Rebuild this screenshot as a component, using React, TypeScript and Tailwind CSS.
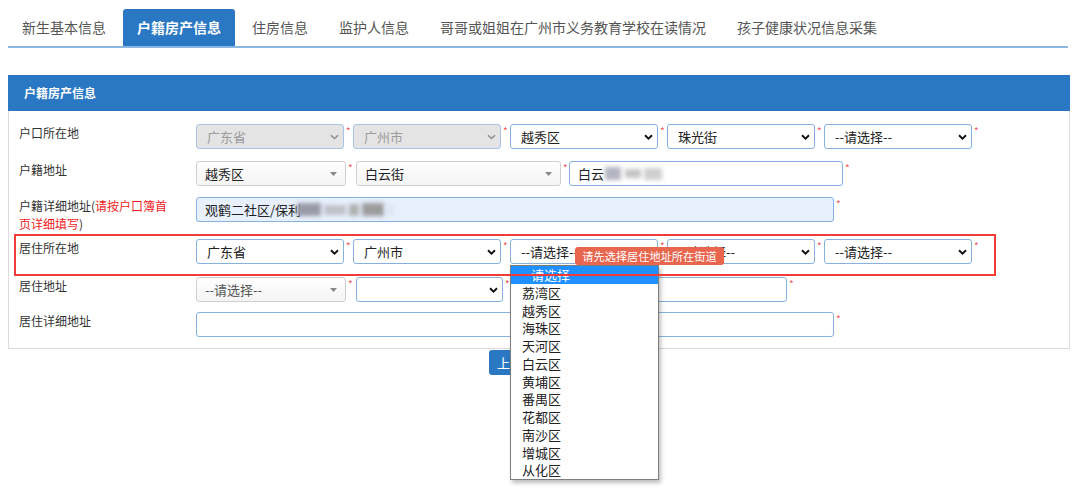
import React from 'react';

const tabs = ['新生基本信息', '户籍房产信息', '住房信息', '监护人信息', '哥哥或姐姐在广州市义务教育学校在读情况', '孩子健康状况信息采集'];
const districts = ['荔湾区', '越秀区', '海珠区', '天河区', '白云区', '黄埔区', '番禺区', '花都区', '南沙区', '增城区', '从化区'];

function Chevron({ gray }: { gray?: boolean }) {
  return (
    <svg width="9" height="6" viewBox="0 0 9 6" className="shrink-0">
      <path d="M1 1.2L4.5 4.6L8 1.2" fill="none" stroke={gray ? '#8c8c8c' : '#111'} strokeWidth={gray ? 1.4 : 1.9} />
    </svg>
  );
}

function Tri() {
  return (
    <svg width="7" height="4" viewBox="0 0 7 4" className="shrink-0">
      <path d="M0 0H7L3.5 4Z" fill="#888" />
    </svg>
  );
}

function Star({ cls }: { cls: string }) {
  return <span className={`${cls} shrink-0 pl-[2px] pt-[2px] text-[10px] leading-[10px] text-[#f25555]`}>*</span>;
}

function NSelect({ cls, text, disabled }: { cls: string; text?: string; disabled?: boolean }) {
  return (
    <div
      className={`${cls} flex h-[25px] shrink-0 items-center justify-between rounded-[3px] border pl-[10px] pr-[4px] text-[13px] ${
        disabled ? 'border-[#a8c5e7] bg-[#e4e4e4] text-[#9b9b9b]' : 'border-[#86b1e1] bg-white text-[#222]'
      }`}
    >
      <span>{text}</span>
      <Chevron gray={disabled} />
    </div>
  );
}

function CSelect({ cls, text, light }: { cls: string; text: string; light?: boolean }) {
  return (
    <div
      className={`${cls} flex h-[25px] shrink-0 items-center justify-between rounded-[3px] border border-[#d0d0d0] bg-gradient-to-b from-white to-[#f4f4f4] pl-[8px] pr-[8px] text-[13px] ${
        light ? 'text-[#555]' : 'text-[#222]'
      }`}
    >
      <span>{text}</span>
      <Tri />
    </div>
  );
}

function Row({ label, children, cls }: { label: React.ReactNode; children: React.ReactNode; cls: string }) {
  return (
    <div className={`flex items-start ${cls}`}>
      <div className="w-[187px] shrink-0 pl-[10px] pr-[25px] text-[12px] leading-[18px] text-[#333]">{label}</div>
      <div className="flex items-start">{children}</div>
    </div>
  );
}

export default function App() {
  return (
    <div className="relative h-[492px] w-[1080px] overflow-hidden bg-white font-['Noto_Sans_CJK_SC',sans-serif] text-[#333]">
      {/* tabs */}
      <div className="ml-[8px] mr-[12px] mt-[9px] flex gap-[3px] border-b-[2px] border-[#8db7e3]">
        {tabs.map((t, i) => (
          <div
            key={t}
            className={
              i === 1
                ? 'flex h-[37px] items-center rounded-t-[3px] bg-[#2a78c3] px-[14px] text-[14px] font-bold text-white'
                : 'flex h-[37px] items-center px-[14px] text-[14px] text-[#555]'
            }
          >
            {t}
          </div>
        ))}
      </div>

      {/* panel */}
      <div className="ml-[8px] mr-[10px] mt-[27px] border border-[#dcdcdc] pb-[11px]">
        <div className="-mx-px -mt-px flex h-[36px] items-center bg-[#2a78c3] pl-[16px] text-[12px] font-bold text-white">户籍房产信息</div>

        <Row label="户口所在地" cls="mt-[13px]">
          <NSelect cls="w-[148px]" text="广东省" disabled />
          <Star cls="w-[9px]" />
          <NSelect cls="w-[148px]" text="广州市" disabled />
          <Star cls="w-[9px]" />
          <NSelect cls="w-[148px]" text="越秀区" />
          <Star cls="w-[9px]" />
          <NSelect cls="w-[148px]" text="珠光街" />
          <Star cls="w-[9px]" />
          <NSelect cls="w-[148px]" text="--请选择--" />
          <Star cls="w-[9px]" />
        </Row>

        <Row label="户籍地址" cls="mt-[12px]">
          <CSelect cls="w-[150px]" text="越秀区" />
          <Star cls="w-[10px]" />
          <CSelect cls="w-[205px]" text="白云街" />
          <Star cls="w-[8px]" />
          <div className="flex h-[25px] w-[274px] shrink-0 items-center rounded-[3px] border border-[#86b1e1] bg-white pl-[8px] text-[13px] text-[#222]">
            <span>白云</span>
            <span className="ml-[1px] h-[13px] w-[16px] bg-[#b4b4c2] blur-[2px]" />
            <span className="ml-[4px] h-[9px] w-[16px] bg-[#c4c4c4] blur-[2px]" />
            <span className="ml-[3px] h-[12px] w-[18px] bg-[#cfcfcf] blur-[2px]" />
          </div>
          <Star cls="w-[9px]" />
        </Row>

        <Row
          label={
            <span>
              户籍详细地址(<span className="text-[#f01c1c]">请按户口簿首页详细填写</span>)
            </span>
          }
          cls="mt-[11px] h-[36px]"
        >
          <div className="flex h-[25px] w-[638px] shrink-0 items-center rounded-[3px] border border-[#86b1e1] bg-[#e8f0fe] pl-[8px] text-[13px] text-[#222]">
            <span>观鹤二社区/保利</span>
            <span className="ml-[-4px] h-[13px] w-[24px] bg-[#9a9aa6] blur-[2px]" />
            <span className="ml-[3px] h-[10px] w-[22px] bg-[#c0c0c8] blur-[2px]" />
            <span className="ml-[3px] h-[12px] w-[10px] bg-[#b0b0b0] blur-[2px]" />
            <span className="ml-[3px] h-[13px] w-[22px] bg-[#9c9c9c] blur-[2px]" />
            <span className="ml-[2px] h-[12px] w-[8px] bg-[#dde6f5] blur-[2px]" />
          </div>
          <Star cls="w-[9px]" />
        </Row>

        <Row label="居住所在地" cls="mt-[6px]">
          <NSelect cls="w-[148px]" text="广东省" />
          <Star cls="w-[9px]" />
          <NSelect cls="w-[148px]" text="广州市" />
          <Star cls="w-[9px]" />
          <NSelect cls="w-[148px]" text="--请选择--" />
          <Star cls="w-[9px]" />
          <NSelect cls="w-[148px]" text="--请选择--" />
          <Star cls="w-[9px]" />
          <NSelect cls="w-[148px]" text="--请选择--" />
          <Star cls="w-[9px]" />
        </Row>

        <Row label="居住地址" cls="mt-[13px]">
          <CSelect cls="w-[150px]" text="--请选择--" light />
          <Star cls="w-[10px]" />
          <NSelect cls="w-[147px]" text="" />
          <Star cls="w-[10px]" />
          <div className="h-[25px] w-[274px] shrink-0 rounded-[3px] border border-[#86b1e1] bg-white" />
          <Star cls="w-[9px]" />
        </Row>

        <Row label="居住详细地址" cls="mt-[10px]">
          <div className="h-[25px] w-[638px] shrink-0 rounded-[3px] border border-[#86b1e1] bg-white" />
          <Star cls="w-[9px]" />
        </Row>
      </div>

      {/* buttons */}
      <div className="ml-[489px] mt-[1px] flex gap-[6px]">
        <div className="flex h-[25px] items-center rounded-[3px] bg-[#2a78c3] px-[8px] text-[13px] text-white">上一步</div>
        <div className="flex h-[25px] items-center rounded-[3px] bg-[#2a78c3] px-[8px] text-[13px] text-white">下一步</div>
      </div>

      {/* open dropdown */}
      <div className="absolute left-[510px] top-[265px] w-[149px] border border-[#7d7d7d] bg-white shadow-[2px_3px_4px_rgba(0,0,0,0.25)]">
        <div className="h-[17.75px] bg-[#1e90ff] pl-[20px] text-[13px] leading-[17.75px] text-white">请选择</div>
        {districts.map((d) => (
          <div key={d} className="h-[17.75px] pl-[11px] text-[13px] leading-[17.75px] text-[#222]">
            {d}
          </div>
        ))}
      </div>

      {/* tooltip */}
      <div className="absolute left-[575px] top-[247px] flex h-[18px] w-[149px] items-center justify-center rounded-[3px] bg-[#e8654e] text-[11.2px] text-white">
        请先选择居住地址所在街道
      </div>

      {/* red annotation box */}
      <div className="absolute left-[14px] top-[234px] h-[42px] w-[982px] border-[2px] border-[#f23b3b]" />
    </div>
  );
}
